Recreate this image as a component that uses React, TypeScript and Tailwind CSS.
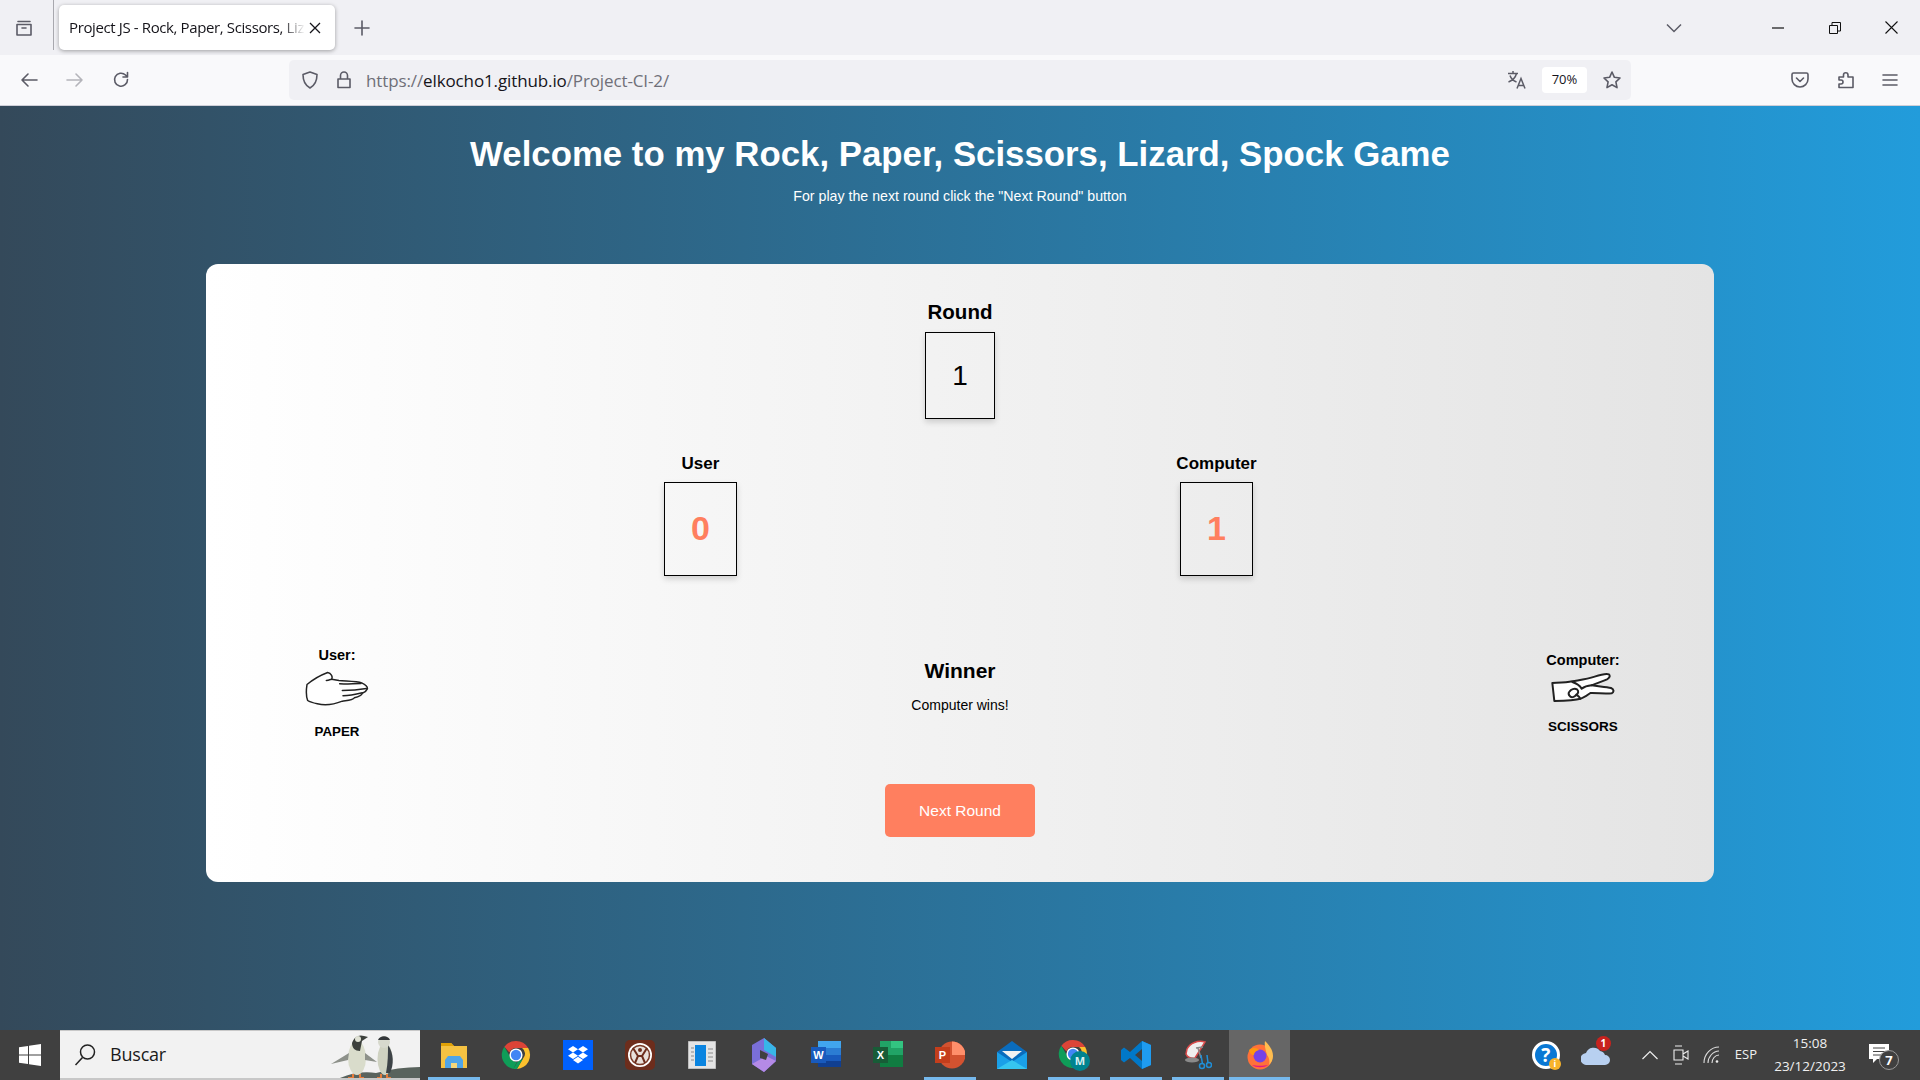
const uiFont = { fontFamily: '"Open Sans", "Noto Sans", sans-serif' };

function ChromeIcon({ size = 30 }: { size?: number }) {
  return (
    <svg width={size} height={size} viewBox="0 0 32 32">
      <path d="M16 1a15 15 0 0 1 13 7.5H16a7.5 7.5 0 0 0-7 4.8L3.6 7.3A15 15 0 0 1 16 1z" fill="#db4437" />
      <path d="M29 8.5A15 15 0 0 1 17 31l6.5-11.2a7.5 7.5 0 0 0-1-11.3z" fill="#fbc02d" />
      <path d="M3.6 7.3 10 18.5a7.5 7.5 0 0 0 7 5l-3.8 7.3A15 15 0 0 1 3.6 7.3z" fill="#0f9d58" />
      <path d="M17 31l6.5-11.2-6 3.7-4.300 7.300z" fill="#0f9d58" />
      <circle cx="16" cy="16" r="7" fill="#fff" />
      <circle cx="16" cy="16" r="5.500" fill="#4285f4" />
    </svg>
  );
}

function PaperHand() {
  return (
    <svg width="64" height="35" viewBox="48 92 192 104" fill="none" stroke="#222" strokeWidth="4.500" strokeLinecap="round" strokeLinejoin="round">
      <path d="M56 180C50 165 52 145 54 132C66 122 84 108 116 96C126 98 132 108 128 116L150 120C175 122 205 122 218 127C228 132 237 138 235 145C232 152 226 156 220 158C218 166 205 170 196 172C190 180 170 180 160 182C140 190 110 196 85 190C72 187 62 184 56 180Z" fill="#fff" />
      <path d="M152 130C175 131 195 129 216 129M160 150C180 150 210 148 232 144M162 166C175 166 200 162 220 157M128 116C122 118 118 120 112 120" />
    </svg>
  );
}

function ScissorsHand() {
  return (
    <svg width="64" height="30" viewBox="64 92 192 90" fill="none" stroke="#222" strokeWidth="6" strokeLinecap="round" strokeLinejoin="round">
      <path d="M68 125C90 124 110 124 128 120C150 116 170 114 195 106C210 101 228 96 238 99C242 104 240 110 232 114C218 120 200 126 186 132C205 135 230 137 244 140C253 144 254 152 246 156C230 158 200 156 182 155C172 162 162 170 152 172C135 177 105 178 74 179C72 160 70 142 68 125Z" fill="#fff" />
      <path d="M120 150C124 144 134 140 142 144C148 150 146 156 140 160C136 166 128 170 122 166C116 160 116 154 120 150ZM128 122C140 126 150 132 156 142M156 142C164 136 176 133 186 132M140 160C146 164 150 168 152 172" />
    </svg>
  );
}

function Penguins() {
  return (
    <svg width="96" height="50" viewBox="0 0 96 50">
      <path d="M10 50C24 42 40 40 52 42C66 38 82 36 96 36V50Z" fill="#59635d" />
      <ellipse cx="33" cy="27" rx="9" ry="17" fill="#d9dccb" />
      <path d="M28 12C30 6 35 3 40 5L44 6L38 10L36 20C31 20 28 17 28 12Z" fill="#3c403c" />
      <circle cx="34" cy="8" r="3" fill="#dfe1d4" />
      <path d="M25 22L7 33L24 29ZM41 22L53 31L41 29Z" fill="#8d918a" />
      <path d="M29 43V47H24M36 43V47H40" stroke="#e77c3b" strokeWidth="2" fill="none" />
      <ellipse cx="61" cy="28" rx="7.500" ry="16" fill="#cfd2c1" />
      <path d="M64 14C70 22 70 34 66 42L62 42C64 32 64 22 64 14Z" fill="#3d4347" />
      <circle cx="60" cy="11" r="6" fill="#d7d9cd" />
      <path d="M54 9C56 4 64 4 66 9Z" fill="#33373a" />
      <path d="M57 43V47H53M63 43V47H67" stroke="#e77c3b" strokeWidth="2" fill="none" />
    </svg>
  );
}

function ToolIcon({ d, size = 20, color = "#5b5b66", width = 1.600 }: { d: string; size?: number; color?: string; width?: number }) {
  return (
    <svg width={size} height={size} viewBox="0 0 20 20" fill="none" stroke={color} strokeWidth={width} strokeLinecap="round" strokeLinejoin="round">
      <path d={d} />
    </svg>
  );
}

function TabStrip() {
  return (
    <div className="flex h-[55px] items-center bg-[#f0f0f4]">
      <div className="flex w-[53px] justify-center pr-[5px]">
        <ToolIcon d="M4 3.500h12M3 6.500h14v10.500h-14zM8 10h4" />
      </div>
      <div className="h-[50px] w-px self-start bg-[#a8a8ae]" />
      <div className="ml-[5px] flex h-[45px] w-[276px] items-center rounded-[5px] bg-white pl-[10px] shadow-[0_1px_4px_rgba(0,0,0,0.35)]">
        <span className="w-[236px] overflow-hidden whitespace-nowrap text-[15px] tracking-[-0.38px] text-[#15141a] [mask-image:linear-gradient(to_right,black_90%,transparent)]">
          Project JS - Rock, Paper, Scissors, Liz
        </span>
        <svg className="ml-[4px]" width="12" height="12" viewBox="0 0 12 12" stroke="#15141a" strokeWidth="1.300">
          <path d="M1 1l10 10M11 1L1 11" />
        </svg>
      </div>
      <div className="ml-[17px]">
        <ToolIcon d="M10 3v14M3 10h14" />
      </div>
      <div className="ml-auto flex items-center">
        <svg width="16" height="10" viewBox="0 0 16 10" fill="none" stroke="#5b5b66" strokeWidth="1.500">
          <path d="M1 1.500l7 7 7-7" />
        </svg>
        <svg className="ml-[90px]" width="12" height="2" viewBox="0 0 12 2" stroke="#111" strokeWidth="1.200">
          <path d="M0 1h12" />
        </svg>
        <svg className="ml-[45px]" width="12" height="12" viewBox="0 0 12 12" fill="none" stroke="#111">
          <path d="M.5 3.500h8v8h-8zM3 3.500V.5h8.500V9H8.500" />
        </svg>
        <svg className="mr-[22px] ml-[44px]" width="13" height="13" viewBox="0 0 13 13" stroke="#111" strokeWidth="1.100">
          <path d="M.5.5l12 12M12.500.5l-12 12" />
        </svg>
      </div>
    </div>
  );
}

function Toolbar() {
  return (
    <div className="flex h-[51px] items-start border-b border-[#cfcfd8] bg-[#f9f9fb] pt-[5px]">
      <div className="flex h-[40px] w-[289px] items-center gap-[26px] pl-[19px]">
        <ToolIcon d="M3 10h15M9 4l-6 6 6 6" />
        <ToolIcon d="M2 10h15M11 4l6 6-6 6" color="#b4b4ba" />
        <ToolIcon d="M16.500 9.500a6.500 6.500 0 1 1-2-4.500l2 2M16.500 2.500v4.500h-4.500" />
      </div>
      <div className="flex h-[40px] w-[1342px] items-center rounded-[5px] bg-[#f0f0f4] pl-[11px]">
        <ToolIcon d="M10 2l7 2.500c0 6-1.500 10.500-7 13.500-5.500-3-7-7.500-7-13.500z" />
        <span className="ml-[14px]">
          <ToolIcon d="M4 9h12v8.500h-12zM6.500 9V5.500a3.500 3.500 0 0 1 7 0V9" />
        </span>
        <span className="mt-[2px] ml-[12px] text-[17px] tracking-[-0.12px] text-[#6f6f78]" style={uiFont}>
          https://<span className="text-[#15141a]">elkocho1.github.io</span>/Project-CI-2/
        </span>
        <div className="ml-auto flex items-center">
          <svg width="20" height="20" viewBox="0 0 20 20" fill="none" stroke="#5b5b66" strokeWidth="1.500">
            <path d="M1 3.500h10M6 1v2.500M9.500 3.500c-1 4-4 7-8 8.500M3 5.500c1 3 4 5.500 6.500 6.500M10 18.500l4-10 4 10M11.300 15.500h5.500" />
          </svg>
          <div className="mr-[15px] ml-[15px] flex h-[26px] w-[45px] items-center justify-center rounded-[4px] bg-white text-[13px] text-[#15141a]" style={uiFont}>
            70%
          </div>
          <span className="mr-[9px]">
            <ToolIcon d="M10 2l2.400 5.300 5.600.7-4.100 3.900 1.100 5.700-5-2.800-5 2.800 1.100-5.700L2 8l5.600-.7z" />
          </span>
        </div>
      </div>
      <div className="flex h-[40px] flex-1 items-center gap-[26px] pl-[159px]">
        <ToolIcon d="M3.500 3h13a1.500 1.500 0 0 1 1.500 1.500V9a8 8 0 0 1-16 0V4.500A1.500 1.500 0 0 1 3.500 3zM6.500 8l3.500 3.500L13.500 8" />
        <ToolIcon d="M3 7h4.500V5a2.200 2.200 0 0 1 4.500 0v2h5v10.500H3v-3.500h2a2 2 0 0 0 0-4H3z" />
        <span className="-ml-[2px]">
          <ToolIcon d="M3 5h14M3 10h14M3 15h14" />
        </span>
      </div>
    </div>
  );
}

function ScoreBox({ label, value }: { label: string; value: string }) {
  return (
    <div className="flex w-[73px] flex-col items-center">
      <div className="mt-[1px] h-[24px] whitespace-nowrap text-[17px] leading-[24px] font-bold text-black">{label}</div>
      <div className="mt-[6px] flex h-[94px] w-[73px] items-center justify-center border border-black pb-[1px] text-[34px] font-bold text-[#ff7f5f] shadow-[0_3px_6px_rgba(0,0,0,0.16)]">
        {value}
      </div>
    </div>
  );
}

function GameCard() {
  return (
    <div className="mx-auto mt-[58px] flex h-[618px] w-[1508px] flex-col items-center rounded-[12px] bg-linear-to-r/srgb from-white to-[#e4e4e4] pt-[36px]">
      <div className="h-[24px] text-[20.5px] leading-[24px] font-bold text-black">Round</div>
      <div className="mt-[8px] flex h-[87px] w-[70px] items-center justify-center border border-black text-[28px] text-black shadow-[0_3px_6px_rgba(0,0,0,0.16)]">
        1
      </div>
      <div className="mt-[32px] mr-[3px] flex gap-[443px]">
        <ScoreBox label="User" value="0" />
        <ScoreBox label="Computer" value="1" />
      </div>
      <div className="mt-[69px] flex h-[96px] w-full items-center justify-between px-[81px]">
        <div className="flex w-[100px] flex-col items-center text-[14px] font-bold text-black">
          <div className="h-[20px] text-[14.500px] leading-[20px]">User:</div>
          <div className="mt-[6px]"><PaperHand /></div>
          <div className="mt-[16px] h-[20px] text-[13.300px] leading-[20px]">PAPER</div>
        </div>
        <div className="flex flex-col items-center self-start pt-[12px]">
          <div className="h-[28px] text-[21px] leading-[28px] font-bold text-black">Winner</div>
          <div className="mt-[10px] h-[20px] text-[14px] leading-[20px] text-black">Computer wins!</div>
        </div>
        <div className="flex w-[100px] flex-col items-center text-[14px] font-bold text-black">
          <div className="h-[20px] text-[14.500px] leading-[20px]">Computer:</div>
          <div className="mt-[2px]"><ScissorsHand /></div>
          <div className="mt-[15px] h-[20px] text-[13.500px] leading-[20px]">SCISSORS</div>
        </div>
      </div>
      <button className="mt-[43px] h-[53px] w-[150px] rounded-[5px] bg-[#ff7f5f] text-[15.500px] text-white">Next Round</button>
    </div>
  );
}

function TaskSlot({ children, line, active }: { children: React.ReactNode; line?: boolean; active?: boolean }) {
  return (
    <div className={active ? "relative flex h-[50px] w-[61px] items-center justify-center bg-[#666666]" : "relative flex h-[50px] w-[62px] items-center justify-center"}>
      {children}
      {line && <div className={active ? "absolute right-0 bottom-0 left-0 h-[3px] bg-[#76b9ed]" : "absolute right-[5px] bottom-0 left-[5px] h-[3px] bg-[#76b9ed]"} />}
    </div>
  );
}

function Taskbar() {
  return (
    <div className="flex h-[50px] items-center bg-[#404040] text-white" style={uiFont}>
      <div className="flex h-[50px] w-[60px] items-center justify-center">
        <svg width="22" height="22" viewBox="0 0 22 22" fill="#fff">
          <path d="M0 3.200l9-1.300V10.500H0zM10 1.700L22 0v10.500H10zM0 11.500h9v8.600l-9-1.300zM10 11.500h12V22l-12-1.700z" />
        </svg>
      </div>
      <div className="flex h-[50px] w-[360px] items-center overflow-hidden border-t border-b-2 border-[#c8c8c8] bg-[#f2f2f2] pl-[14px] text-[#1a1a1a]">
        <svg width="22" height="24" viewBox="0 0 22 24" fill="none" stroke="#222" strokeWidth="1.500">
          <circle cx="13.500" cy="9" r="7" />
          <path d="M8.500 14.500L1.500 22" />
        </svg>
        <span className="ml-[14px] text-[18px] tracking-[-0.2px]">Buscar</span>
        <div className="mt-auto ml-auto"><Penguins /></div>
      </div>
      <div className="flex pl-[3px]">
        <TaskSlot line>
          <svg width="28" height="28" viewBox="0 0 28 28">
            <path d="M1 2h10l3 3h13v22H1z" fill="#f5c242" />
            <path d="M1 2h10l3 3H1z" fill="#e0a106" />
            <path d="M8 15h12l3 4v8H5v-8z" fill="#4fa5e8" />
            <path d="M11 22h6v5h-6z" fill="#f5d77a" />
          </svg>
        </TaskSlot>
        <TaskSlot><ChromeIcon /></TaskSlot>
        <TaskSlot>
          <div className="flex h-[30px] w-[30px] items-center justify-center bg-[#0061fe]">
            <svg width="20" height="18" viewBox="0 0 20 18" fill="#fff">
              <path d="M5 0L0 3.300l5 3.200 5-3.200zM15 0l-5 3.300 5 3.200 5-3.200zM0 9.700L5 13l5-3.300-5-3.200zM15 6.500l-5 3.200L15 13l5-3.300zM5 14l5 3.500 5-3.500-5-3.200z" />
            </svg>
          </div>
        </TaskSlot>
        <TaskSlot>
          <svg width="30" height="30" viewBox="0 0 30 30">
            <rect width="30" height="30" rx="5" fill="#6d2d1c" />
            <circle cx="15" cy="15" r="12" fill="#fff" />
            <circle cx="15" cy="15" r="9.500" fill="#e8e0da" stroke="#7a3a26" strokeWidth="1.500" />
            <path d="M8 8l5 8-3 7M22 8l-5 8 3 7M13 16h4" stroke="#6d2d1c" strokeWidth="2" fill="none" />
            <circle cx="15" cy="10" r="2" fill="#6d2d1c" />
          </svg>
        </TaskSlot>
        <TaskSlot>
          <svg width="28" height="28" viewBox="0 0 28 28">
            <rect width="28" height="28" fill="#e4e4e4" stroke="#9a9a9a" />
            <rect x="7" y="4" width="11" height="21" fill="#0a84e0" />
            <path d="M3 7h3M3 11h3M3 15h3M3 19h3M20 8h5M20 12h5M20 16h5M20 20h5" stroke="#8a8a8a" />
          </svg>
        </TaskSlot>
        <TaskSlot>
          <svg width="28" height="36" viewBox="0 0 28 36">
            <path d="M14 1l12 10v13L14 35 2 27V8z" fill="#7a6fd8" />
            <path d="M14 1l12 10v9L14 13z" fill="#38b6e8" />
            <path d="M2 27l12 8 12-11-10-5z" fill="#b58ae6" />
            <path d="M10 13l8 4-2 6-6-2z" fill="#404040" />
          </svg>
        </TaskSlot>
        <TaskSlot>
          <svg width="30" height="30" viewBox="0 0 30 30">
            <path d="M7 1h23v26H7z" fill="#2b7cd3" />
            <path d="M7 1h23v7H7z" fill="#41a5ee" />
            <path d="M7 15h23v6H7z" fill="#185abd" />
            <path d="M7 21h23v6H7z" fill="#103f91" />
            <rect x="0" y="7" width="15" height="16" fill="#185abd" />
            <text x="7.500" y="19" fontSize="11" fontWeight="700" fill="#fff" textAnchor="middle" fontFamily="Liberation Sans">W</text>
          </svg>
        </TaskSlot>
        <TaskSlot>
          <svg width="30" height="30" viewBox="0 0 30 30">
            <path d="M7 1h23v26H7z" fill="#21a366" />
            <path d="M18 1h12v7H18z" fill="#33c481" />
            <path d="M7 15h23v12H7z" fill="#107c41" />
            <rect x="0" y="7" width="15" height="16" fill="#185c37" />
            <text x="7.500" y="19" fontSize="11" fontWeight="700" fill="#fff" textAnchor="middle" fontFamily="Liberation Sans">X</text>
          </svg>
        </TaskSlot>
        <TaskSlot line>
          <svg width="30" height="30" viewBox="0 0 30 30">
            <circle cx="17" cy="15" r="13.500" fill="#d35230" />
            <path d="M17 1.500A13.500 13.500 0 0 1 30.500 15H17z" fill="#ff8f6b" />
            <rect x="0" y="7" width="15" height="16" fill="#c43e1c" />
            <text x="7.500" y="19" fontSize="11" fontWeight="700" fill="#fff" textAnchor="middle" fontFamily="Liberation Sans">P</text>
          </svg>
        </TaskSlot>
        <TaskSlot>
          <svg width="30" height="28" viewBox="0 0 30 28">
            <path d="M0 11L15 0l15 11v17H0z" fill="#0a6cbd" />
            <path d="M5 10h20l-10 8z" fill="#f2f2f2" />
            <path d="M0 11l15 10 15-10v17H0z" fill="#1aa0e8" />
            <path d="M0 28l15-9 15 9z" fill="#36c5f0" />
          </svg>
        </TaskSlot>
        <TaskSlot line>
          <div className="relative h-[32px] w-[32px]">
            <ChromeIcon />
            <div className="absolute right-0 bottom-0 flex h-[20px] w-[20px] items-center justify-center rounded-full bg-[#00838f] text-[11px] font-bold text-[#d8f0f2]">M</div>
          </div>
        </TaskSlot>
        <TaskSlot line>
          <svg width="30" height="30" viewBox="0 0 30 30">
            <path d="M21 1l9 4v20l-9 4-12-11-6 4.500L0 20V10l3-2.500 6 4.500z" fill="#0078c8" />
            <path d="M21 1l9 4v20l-9 4z" fill="#1f9cf0" />
            <path d="M21 9l-7 6 7 6z" fill="#404040" />
          </svg>
        </TaskSlot>
        <TaskSlot line>
          <svg width="28" height="30" viewBox="0 0 28 30" fill="none">
            <path d="M3 9C6 3 14 0 21 2L11 18C7 19 3 17 2 14z" fill="#f0f0f0" stroke="#d84a4a" strokeWidth="1.500" />
            <path d="M14 8l3 10M12 8l7-1" stroke="#8a8a8a" strokeWidth="1.500" />
            <ellipse cx="8" cy="20" rx="7" ry="2.500" fill="#8a8a8a" />
            <circle cx="18" cy="26" r="2.500" stroke="#1f8fd8" strokeWidth="1.500" />
            <circle cx="25" cy="25" r="2.500" stroke="#1f8fd8" strokeWidth="1.500" />
            <path d="M17 15l1.500 9M23 15l1 8" stroke="#1f8fd8" strokeWidth="1.500" />
          </svg>
        </TaskSlot>
        <TaskSlot line active>
          <svg width="30" height="30" viewBox="0 0 30 30">
            <circle cx="15" cy="17" r="12.500" fill="#ff7139" />
            <path d="M20 1c3 3 8 8 8 15 0 4-2 7-4 9 1-4 0-8-2-10-1-4-3-9-2-14z" fill="#ffbd4f" />
            <circle cx="15" cy="16" r="6.500" fill="#7542e5" />
            <path d="M4 10c4-3 8-2 10 0-3 1-5 2-5 5-3 0-4-2-5-5z" fill="#ff980e" />
            <path d="M7 25c4 3 12 3 16 0-4 1-12 1-16 0z" fill="#e31587" />
          </svg>
        </TaskSlot>
      </div>
      <div className="ml-auto flex h-[50px] items-center">
        <div className="relative h-[28px] w-[28px] rounded-full border-[3px] border-white bg-[#0a78d4] text-center text-[19px] leading-[22px] font-bold">
          ?
          <div className="absolute -right-[4px] -bottom-[4px] h-[12px] w-[12px] rounded-full bg-[#f7b32b] text-[9px] leading-[12px]">i</div>
        </div>
        <div className="relative ml-[21px]">
          <svg width="30" height="20" viewBox="0 0 30 20">
            <path d="M6 20a6 6 0 0 1-1-12A8 8 0 0 1 19 6a6 6 0 0 1 5 4 5 5 0 0 1 0 10z" fill="#b8d0f0" />
          </svg>
          <div className="absolute -top-[9px] right-0 h-[15px] w-[15px] rounded-full bg-[#c8221e] text-center text-[10px] leading-[15px] font-bold">1</div>
        </div>
        <svg className="ml-[31px]" width="16" height="10" viewBox="0 0 16 10" fill="none" stroke="#eee" strokeWidth="1.200">
          <path d="M.5 9L8 1.500 15.500 9" />
        </svg>
        <svg className="ml-[15px]" width="16" height="20" viewBox="0 0 16 20" fill="none" stroke="#eee" strokeWidth="1.100">
          <path d="M2 1h7M2 19h7M1 5h9v10H1zM10 9l5-3v8l-5-3" />
        </svg>
        <svg className="ml-[14px]" width="18" height="18" viewBox="0 0 18 18" fill="none" stroke="#ddd" strokeWidth="1.100">
          <path d="M1 17C1 8 8 1 16 1M5 17c0-6 5-12 11-12M9 17c0-4 3-8 7-8" />
          <circle cx="14" cy="15.500" r="1.300" fill="#eee" stroke="none" />
        </svg>
        <span className="ml-[14px] text-[13px] text-[#f0f0f0]">ESP</span>
        <div className="ml-[15px] flex w-[76px] flex-col items-center text-[13.5px] leading-[23px] text-[#f0f0f0]">
          <span>15:08</span>
          <span className="whitespace-nowrap">23/12/2023</span>
        </div>
        <div className="relative mr-[31px] ml-[21px] h-[22px] w-[20px]">
          <svg width="20" height="20" viewBox="0 0 20 20">
            <path d="M0 0h20v15H8l-4 4v-4H0z" fill="#fff" />
            <path d="M4 4h12M4 7.500h12M4 11h8" stroke="#444" />
          </svg>
          <div className="absolute -right-[10px] -bottom-[4px] h-[20px] w-[20px] rounded-full border border-[#999] bg-[#404040] text-center text-[13px] leading-[18px] font-bold">7</div>
        </div>
      </div>
    </div>
  );
}

export default function App() {
  return (
    <div className="flex h-screen w-full flex-col overflow-hidden font-['Liberation_Sans',Arial,sans-serif]">
      <div style={uiFont}>
        <TabStrip />
        <Toolbar />
      </div>
      <main className="flex-1 bg-linear-to-r/srgb from-[#34495a] to-[#229cdb]">
        <h1 className="mt-[28px] text-center text-[34.800px] leading-[40px] font-bold text-white">
          Welcome to my Rock, Paper, Scissors, Lizard, Spock Game
        </h1>
        <p className="mt-[12px] text-center text-[14.200px] leading-[20px] text-white">
          For play the next round click the "Next Round" button
        </p>
        <GameCard />
      </main>
      <Taskbar />
    </div>
  );
}
